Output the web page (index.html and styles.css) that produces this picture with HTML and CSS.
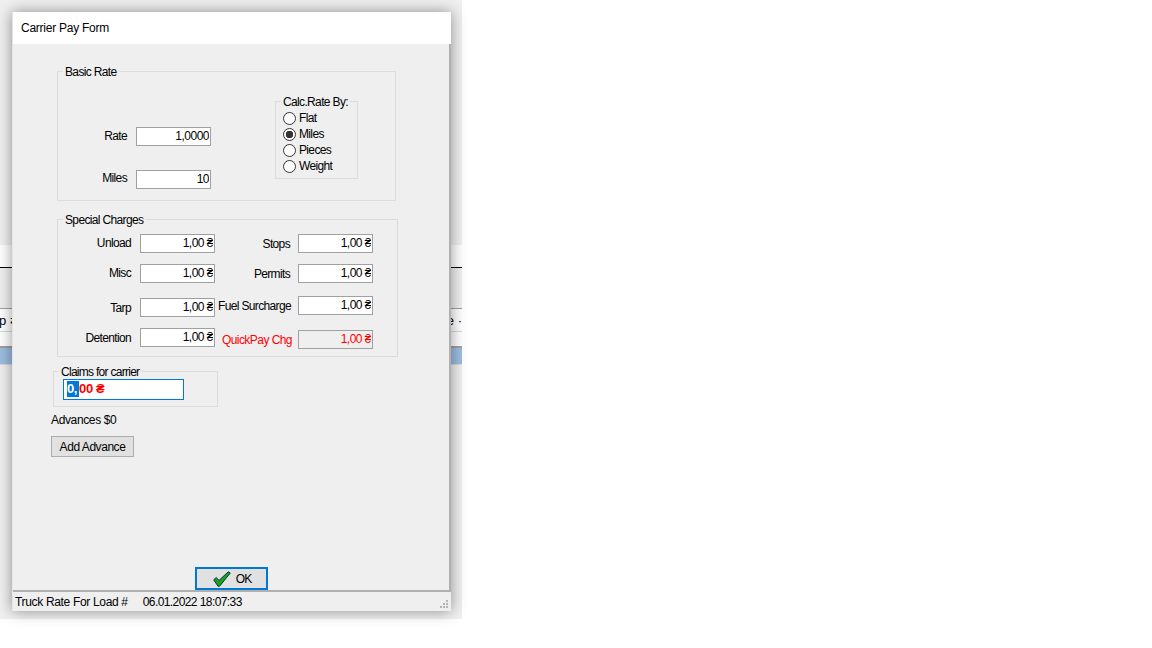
FILE: index.html
```html
<!DOCTYPE html>
<html lang="en">
<head>
    <meta charset="UTF-8">
    <title>Carrier Pay Form</title>
    <link rel="stylesheet" href="styles.css">
</head>
<body>
    <div class="desktop">
        <!-- Parent window showing behind the dialog -->
        <div class="backdrop">
            <div class="strip strip-top"></div>
            <div class="strip strip-light"></div>
            <div class="strip strip-rule"></div>
            <div class="strip strip-grey"></div>
            <div class="strip strip-head"><span>p ⇄</span><span>e ·</span></div>
            <div class="strip strip-row"></div>
            <div class="strip strip-blue"></div>
            <div class="strip strip-rest"></div>
        </div>

        <div class="window">
            <div class="titlebar">Carrier Pay Form</div>

            <div class="form">
                <div class="group group-basic">
                    <div class="group-title">Basic Rate</div>
                    <div class="basic-layout">
                        <div class="basic-fields">
                            <div class="field">
                                <label class="field-label">Rate</label>
                                <input class="field-input" value="1,0000">
                            </div>
                            <div class="field field-miles">
                                <label class="field-label">Miles</label>
                                <input class="field-input" value="10">
                            </div>
                        </div>
                        <div class="group group-calc">
                            <div class="group-title">Calc.Rate By:</div>
                            <label class="radio-row"><input type="radio" name="calc">Flat</label>
                            <label class="radio-row"><input type="radio" name="calc" checked>Miles</label>
                            <label class="radio-row"><input type="radio" name="calc">Pieces</label>
                            <label class="radio-row"><input type="radio" name="calc">Weight</label>
                        </div>
                    </div>
                </div>

                <div class="group group-special">
                    <div class="group-title">Special Charges</div>
                    <div class="charges">
                        <div class="charges-col charges-left">
                            <div class="charge"><label class="charge-label label-high">Unload</label><input class="field-input" value="1,00 ₴"></div>
                            <div class="charge gap-11"><label class="charge-label label-high">Misc</label><input class="field-input" value="1,00 ₴"></div>
                            <div class="charge gap-15"><label class="charge-label">Tarp</label><input class="field-input" value="1,00 ₴"></div>
                            <div class="charge gap-11"><label class="charge-label">Detention</label><input class="field-input" value="1,00 ₴"></div>
                        </div>
                        <div class="charges-col charges-right">
                            <div class="charge"><label class="charge-label">Stops</label><input class="field-input" value="1,00 ₴"></div>
                            <div class="charge gap-11"><label class="charge-label">Permits</label><input class="field-input" value="1,00 ₴"></div>
                            <div class="charge gap-13"><label class="charge-label">Fuel Surcharge</label><input class="field-input" value="1,00 ₴"></div>
                            <div class="charge gap-15"><label class="charge-label label-red">QuickPay Chg</label><input class="field-input input-disabled" value="1,00 ₴" disabled></div>
                        </div>
                    </div>
                </div>

                <div class="group group-claims">
                    <div class="group-title">Claims for carrier</div>
                    <div class="claims-input"><span class="claims-selected">0,</span>00 ₴</div>
                </div>

                <div class="advances">Advances $0</div>
                <button class="btn btn-advance">Add Advance</button>

                <button class="btn btn-ok">
                    <svg class="check" width="18" height="16" viewBox="0 0 18 16">
                        <path d="M0.7 8.8 L3.2 6.6 L6 9.4 L15.4 0.7 L17.3 2 L6.6 15.2 L5 15.2 Z" fill="#14a514" stroke="#0c2f52" stroke-width="1" stroke-linejoin="round"/>
                    </svg>
                    <span class="ok-text">OK</span>
                </button>
            </div>

            <div class="statusbar">
                <span class="status-text">Truck Rate For Load #</span>
                <span class="status-date">06.01.2022 18:07:33</span>
                <svg class="grip" width="9" height="9" viewBox="0 0 9 9" fill="#b4b4b4">
                    <rect x="6" y="0" width="2" height="2"/>
                    <rect x="3" y="3" width="2" height="2"/>
                    <rect x="6" y="3" width="2" height="2"/>
                    <rect x="0" y="6" width="2" height="2"/>
                    <rect x="3" y="6" width="2" height="2"/>
                    <rect x="6" y="6" width="2" height="2"/>
                </svg>
            </div>
        </div>
    </div>
</body>
</html>
```

FILE: styles.css
```css
body {
    margin: 0;
    background: #fff;
    font-family: "Liberation Sans", Arial, sans-serif;
    font-size: 12px;
    color: #000;
}

.desktop {
    position: relative;
    width: 1152px;
    height: 648px;
    overflow: hidden;
}

/* Parent window behind the dialog */
.backdrop {
    width: 462px;
    height: 619px;
    background: #f0f0f0;
    display: flex;
    flex-direction: column;
}

.strip-top { height: 245px; background: #f0f0f0; }
.strip-light { height: 22px; background: #fff; }
.strip-rule { height: 1px; background: #000; }
.strip-grey { height: 40px; background: #f0f0f0; border-bottom: 1px solid #a0a0a0; }

.strip-head {
    height: 22px;
    background: #fff;
    border-bottom: 1px solid #d8d8d8;
    display: flex;
    justify-content: space-between;
    align-items: center;
    font-size: 13px;
}

.strip-head span:first-child { margin-left: -1px; }
.strip-row { height: 14px; background: #fff; border-bottom: 2px solid #a0a0a0; }
.strip-blue { height: 16px; background: #9dbde0; }
.strip-rest { flex: 1; background: #f0f0f0; border-top: 1px solid #d8d8d8; }

.window {
    position: absolute;
    left: 12px;
    top: 12px;
    width: 439px;
    height: 599px;
    background: #efefef;
    box-shadow: 0 0 14px rgba(0, 0, 0, 0.42);
    display: flex;
    flex-direction: column;
    box-sizing: border-box;
    border-left: 1px solid #e4e4e4;
}

.titlebar {
    height: 32px;
    line-height: 33px;
    padding-left: 8px;
    background: #fff;
    flex: none;
    letter-spacing: -0.25px;
}

.form {
    flex: 1;
    display: flex;
    flex-direction: column;
    align-items: flex-start;
    padding-left: 44px;
    border-right: 2px solid #b0b0b0;
    border-bottom: 2px solid #b0b0b0;
    letter-spacing: -0.65px;
    white-space: nowrap;
}

/* Group boxes */
.group {
    border: 1px solid #dcdcdc;
    box-sizing: border-box;
}

.group-title {
    width: fit-content;
    margin: -8px 0 0 5px;
    padding: 1px 2px 0;
    line-height: 14px;
    background: #efefef;
}

.group-basic {
    width: 339px;
    height: 130px;
    margin-top: 27px;
}

.basic-layout { display: flex; }

.basic-fields {
    width: 153px;
    padding-top: 48px;
}

.field {
    display: flex;
    align-items: center;
    gap: 9px;
}

.field-miles { margin-top: 24px; }

.field-label {
    width: 69px;
    text-align: right;
    margin-bottom: 1px;
}

.field-miles .field-label { margin-bottom: 3px; }

.field-input {
    width: 75px;
    height: 19px;
    box-sizing: border-box;
    border: 1px solid #a0a0a0;
    padding: 0 1px 2px 0;
    margin: 0;
    background: #fff;
    font: inherit;
    letter-spacing: -0.5px;
    color: #000;
    text-align: right;
    outline: none;
}

.input-disabled {
    background: #efefef;
    color: #f00;
}

.group-calc {
    width: 83px;
    height: 78px;
    margin: 22px 0 0 64px;
}

.radio-row {
    display: flex;
    align-items: center;
    height: 16px;
    padding-left: 7px;
    gap: 3px;
}

.radio-row:first-of-type { margin-top: 1px; }

.radio-row input {
    appearance: none;
    width: 13px;
    height: 13px;
    margin: 0;
    border: 1px solid #333;
    border-radius: 50%;
    background: #fff;
    box-sizing: border-box;
}

.radio-row input:checked {
    background: radial-gradient(circle, #333 0 3.5px, #fff 4px);
}

/* Special charges */
.group-special {
    width: 341px;
    height: 138px;
    margin-top: 18px;
}

.charges {
    display: flex;
    gap: 3px;
    padding-top: 7px;
}

.charge {
    display: flex;
    align-items: center;
    gap: 9px;
}

.charge-label {
    text-align: right;
}

.charges-left .charge-label { width: 73px; }
.charges-left .label-high { margin-bottom: 1px; }
.charges-right .charge { gap: 8px; }
.charges-right .charge-label { width: 72px; }

.charges-right .label-red {
    color: #f00;
    margin: 0 -2px 0 2px;
    letter-spacing: -0.55px;
}

.gap-11 { margin-top: 11px; }
.gap-13 { margin-top: 13px; }
.gap-15 { margin-top: 15px; }

/* Claims */
.group-claims {
    width: 165px;
    height: 36px;
    margin: 14px 0 0 -4px;
}

.group-claims .group-title { letter-spacing: -0.72px; }

.claims-input {
    width: 121px;
    height: 21px;
    box-sizing: border-box;
    margin: 0 0 0 9px;
    padding: 1px 0 0 3px;
    border: 1px solid #0078d7;
    background: #fff;
    color: #f00;
    font-size: 13px;
    font-weight: bold;
    letter-spacing: -0.4px;
    line-height: 16px;
}

.claims-selected {
    display: inline-block;
    padding-right: 2px;
    background: #0078d7;
    color: #fff;
}

.advances {
    margin: 6px 0 0 -6px;
    line-height: 14px;
    letter-spacing: -0.36px;
}

.btn {
    background: #e1e1e1;
    border: 1px solid #adadad;
    font: inherit;
    color: #000;
    padding: 0;
}

.btn-advance {
    width: 83px;
    height: 21px;
    margin: 9px 0 0 -6px;
    letter-spacing: -0.45px;
}

.btn-ok {
    width: 73px;
    height: 23px;
    margin: auto 0 0 138px;
    padding-left: 1px;
    border: 2px solid #0078d7;
    display: flex;
    align-items: center;
    justify-content: center;
    gap: 5px;
}

.ok-text { letter-spacing: -1px; }

.statusbar {
    flex: none;
    height: 19px;
    display: flex;
    align-items: center;
    padding-left: 2px;
    position: relative;
    letter-spacing: -0.33px;
}

.status-date {
    margin-left: 15px;
    letter-spacing: -0.58px;
}

.grip {
    position: absolute;
    right: 2px;
    bottom: 2px;
}
```
